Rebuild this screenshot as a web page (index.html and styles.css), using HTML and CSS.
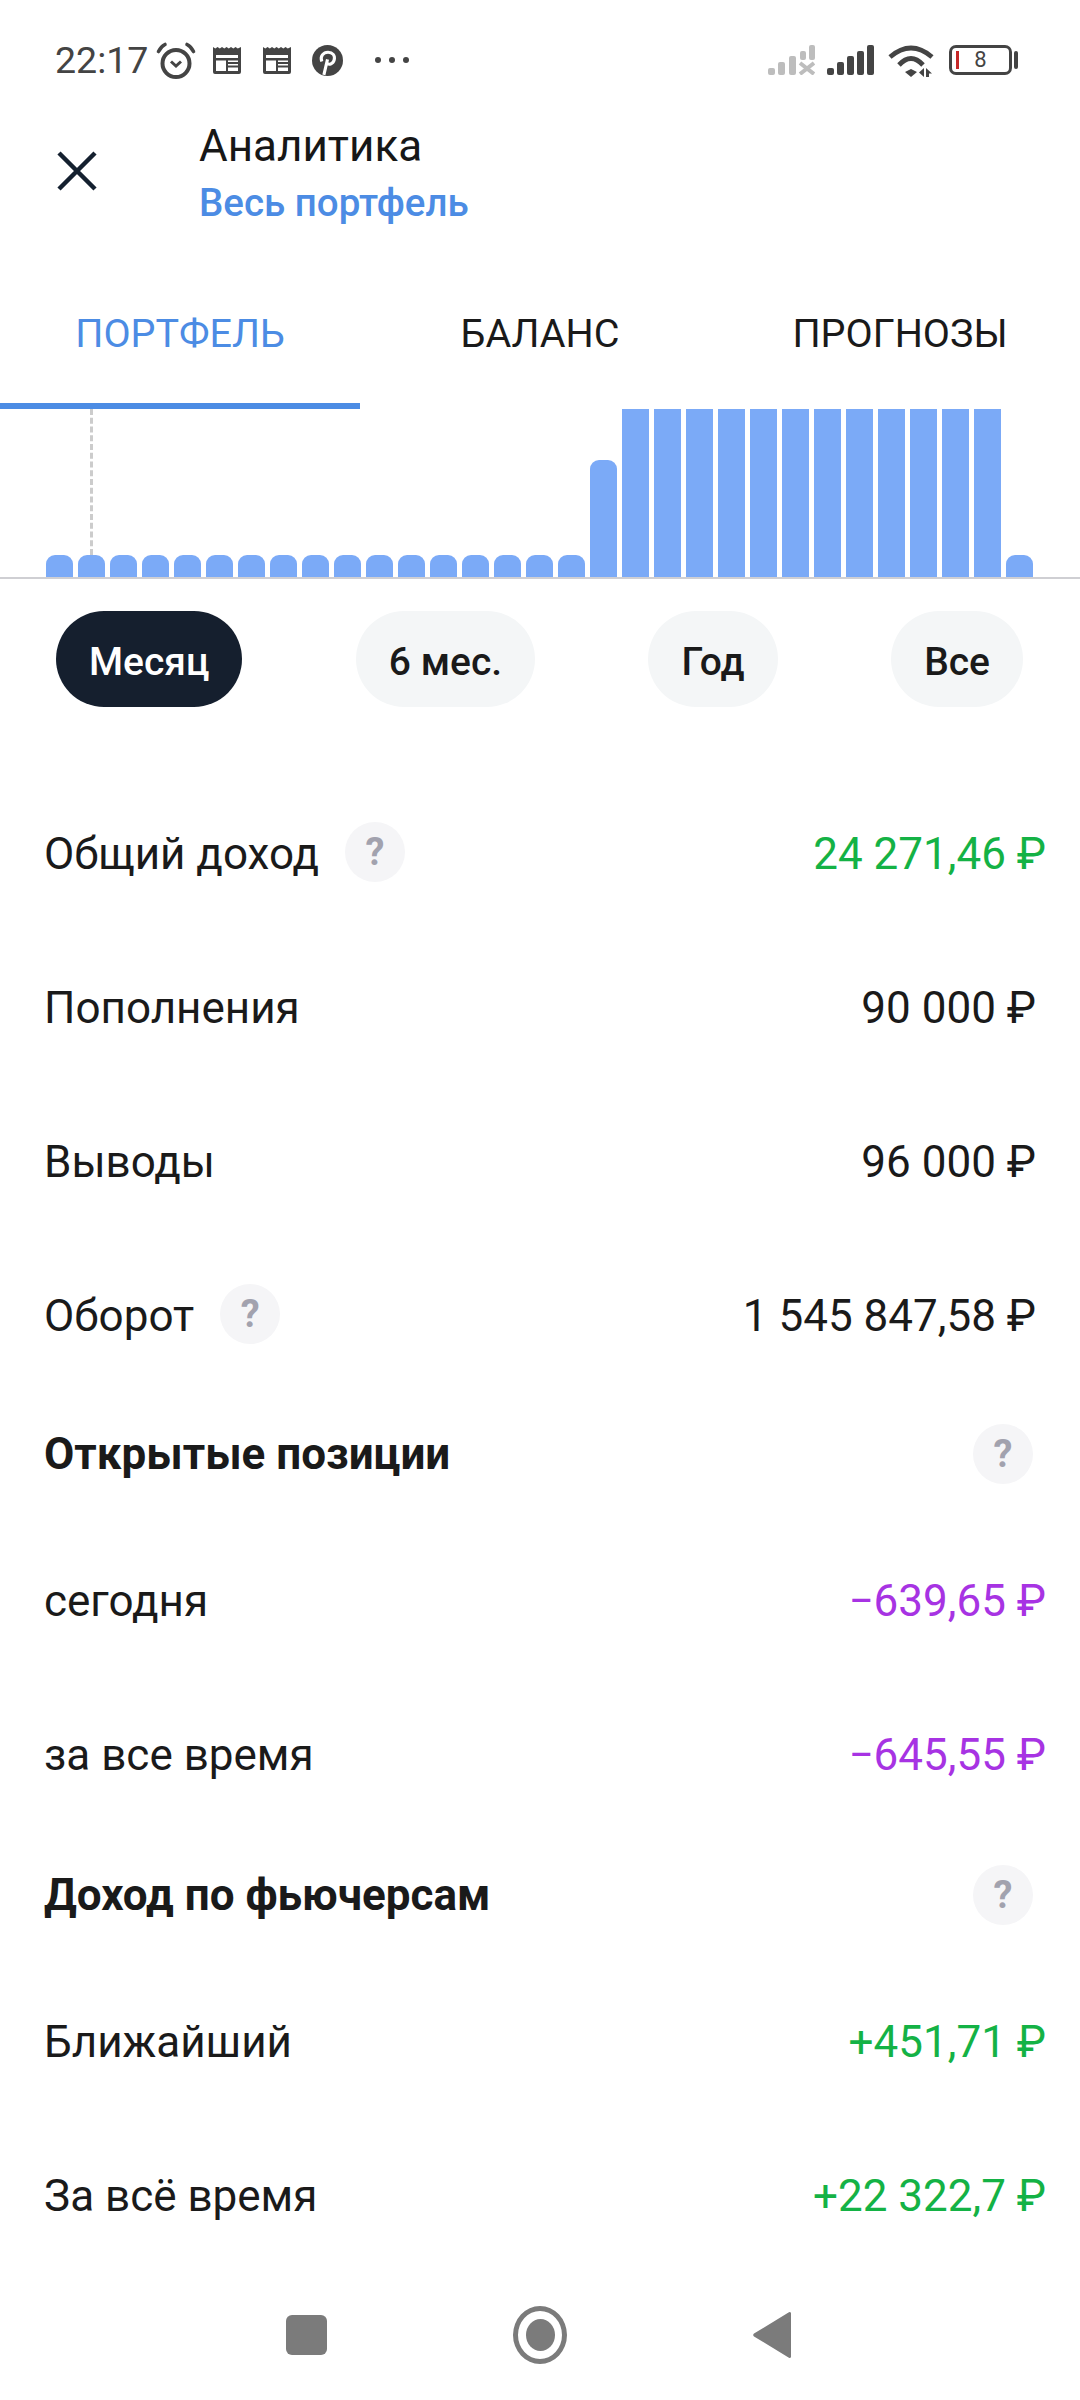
FILE: index.html
```html
<!DOCTYPE html>
<html lang="ru">
<head>
<meta charset="utf-8">
<title>Аналитика</title>
<link rel="stylesheet" href="styles.css">
</head>
<body>
<div class="screen">
  <header class="status">
    <div class="status-left">
      <span class="time">22:17</span>
      <svg class="ic-alarm" viewBox="0 0 40 37"><circle cx="20" cy="21.500" r="13.500" fill="none" stroke="#444" stroke-width="4"/><path d="M15 19.500l5 4.500 5-4.500" fill="none" stroke="#444" stroke-width="3"/><path d="M2.500 9.500C4 6.500 6 4 9 2.500M37.500 9.500C36 6.500 34 4 31 2.500" fill="none" stroke="#444" stroke-width="3.600" stroke-linecap="round"/></svg>
      <svg class="ic-news" viewBox="0 0 30 28"><path d="M1 1l2.300 1.500L5.500 1l2.300 1.500L10 1l2.300 1.500L14.500 1l2.300 1.500L19 1l2.300 1.500L23.500 1l2.300 1.500L29 1v25a2 2 0 0 1-2 2H3a2 2 0 0 1-2-2z" fill="#444"/><path d="M4 9h22v3H4zM4 14.500h10V25H4zM16 14.500h10V16H16zM16 18h10v1.500H16zM16 21.500h10V25H16z" fill="#fff"/></svg>
      <svg class="ic-news ic-news--next" viewBox="0 0 30 28"><path d="M1 1l2.300 1.500L5.500 1l2.300 1.500L10 1l2.300 1.500L14.500 1l2.300 1.500L19 1l2.300 1.500L23.500 1l2.300 1.500L29 1v25a2 2 0 0 1-2 2H3a2 2 0 0 1-2-2z" fill="#444"/><path d="M4 9h22v3H4zM4 14.500h10V25H4zM16 14.500h10V16H16zM16 18h10v1.500H16zM16 21.500h10V25H16z" fill="#fff"/></svg>
      <svg class="ic-pin" viewBox="0 0 30 30"><circle cx="15" cy="15" r="15" fill="#444"/><path d="M11.500 29l3.500-15M9.500 16c-2-5 1.500-9 6-9 4.500 0 7 3 6 7.500-1 4-5.500 5.500-7.500 2.500" fill="none" stroke="#fff" stroke-width="3"/></svg>
      <span class="dots"><i></i><i></i><i></i></span>
    </div>
    <div class="status-right">
      <svg class="ic-sig" viewBox="0 0 47 30"><g fill="#bdbdbd"><rect x="0" y="23" width="7" height="7" rx="2"/><rect x="10" y="17" width="7" height="13" rx="2"/><rect x="21" y="11" width="7" height="19" rx="2"/><rect x="32" y="6" width="6" height="9" rx="2"/><rect x="41" y="0" width="6" height="15" rx="2"/></g><path d="M32 18l14 11M46 18L32 29" stroke="#bdbdbd" stroke-width="4"/></svg>
      <svg class="ic-sig ic-sig--on" viewBox="0 0 47 30"><g fill="#444"><rect x="0" y="23" width="7" height="7" rx="2"/><rect x="10" y="17" width="7" height="13" rx="2"/><rect x="20" y="11" width="7" height="19" rx="2"/><rect x="30" y="6" width="7" height="24" rx="2"/><rect x="40" y="0" width="7" height="30" rx="2"/></g></svg>
      <svg class="ic-wifi" viewBox="0 0 46 33"><path d="M2 13Q23-5 44 13M11 21Q23 8 35 21" fill="none" stroke="#444" stroke-width="4.800"/><path d="M17 28l6-3 6 3-6 5z" fill="#444"/><path d="M36 24v9l-5-4.500zM38 24l6 5.500h-3V33h-3z" fill="#444"/></svg>
      <div class="battery"><span class="battery-level"></span><span class="battery-num">8</span><span class="battery-cap"></span></div>
    </div>
  </header>

  <div class="titlebar">
    <svg class="ic-close" viewBox="0 0 40 40"><path d="M2 2l36 36M38 2L2 38" stroke="#14202f" stroke-width="4.500" fill="none"/></svg>
    <div class="titles">
      <div class="title">Аналитика</div>
      <div class="subtitle">Весь портфель</div>
    </div>
  </div>

  <nav class="tabs">
    <div class="tab tab--active">ПОРТФЕЛЬ</div>
    <div class="tab">БАЛАНС</div>
    <div class="tab">ПРОГНОЗЫ</div>
  </nav>

  <div class="chart">
    <span class="cursor"></span>
    <span class="bar"></span><span class="bar"></span><span class="bar"></span><span class="bar"></span><span class="bar"></span><span class="bar"></span><span class="bar"></span><span class="bar"></span><span class="bar"></span><span class="bar"></span><span class="bar"></span><span class="bar"></span><span class="bar"></span><span class="bar"></span><span class="bar"></span><span class="bar"></span><span class="bar"></span>
    <span class="bar bar--mid"></span>
    <span class="bar bar--full"></span><span class="bar bar--full"></span><span class="bar bar--full"></span><span class="bar bar--full"></span><span class="bar bar--full"></span><span class="bar bar--full"></span><span class="bar bar--full"></span><span class="bar bar--full"></span><span class="bar bar--full"></span><span class="bar bar--full"></span><span class="bar bar--full"></span><span class="bar bar--full"></span>
    <span class="bar"></span>
  </div>

  <div class="pills">
    <div class="pill pill--active">Месяц</div>
    <div class="pill">6 мес.</div>
    <div class="pill">Год</div>
    <div class="pill">Все</div>
  </div>

  <main class="stats">
    <div class="row"><div class="label">Общий доход<span class="help">?</span></div><div class="val val--green">24 271,46 ₽</div></div>
    <div class="row"><div class="label">Пополнения</div><div class="val">90 000 ₽</div></div>
    <div class="row"><div class="label">Выводы</div><div class="val">96 000 ₽</div></div>
    <div class="row"><div class="label">Оборот<span class="help">?</span></div><div class="val">1 545 847,58 ₽</div></div>
    <div class="section"><div class="section-title">Открытые позиции</div><span class="help">?</span></div>
    <div class="row"><div class="label">сегодня</div><div class="val val--purple">−639,65 ₽</div></div>
    <div class="row"><div class="label">за все время</div><div class="val val--purple">−645,55 ₽</div></div>
    <div class="section section--late"><div class="section-title">Доход по фьючерсам</div><span class="help">?</span></div>
    <div class="row"><div class="label">Ближайший</div><div class="val val--green">+451,71 ₽</div></div>
    <div class="row"><div class="label">За всё время</div><div class="val val--green">+22 322,7 ₽</div></div>
  </main>

  <footer class="navbar">
    <span class="nav-square"></span>
    <span class="nav-home"><i></i></span>
    <svg class="nav-back" viewBox="0 0 38 46"><path d="M35.500 .500a1.500 1.500 0 0 1 2.500 1.500v42a1.500 1.500 0 0 1-2.500 1.500L1 24.500a1.800 1.800 0 0 1 0-3z" fill="#7b7b7b"/></svg>
  </footer>
</div>
</body>
</html>
```

FILE: styles.css
```css
* { box-sizing: border-box; }
html, body { margin: 0; padding: 0; background: #fff; }
body { font-family: Roboto, "Liberation Sans", sans-serif; color: #1a1a1a; }
.screen { width: 1080px; height: 2400px; overflow: hidden; position: relative; display: flex; flex-direction: column; }

.status { height: 120px; padding: 40px 62px 0 55px; display: flex; justify-content: space-between; align-items: flex-start; }
.status-left { display: flex; align-items: center; height: 40px; color: #444; }
.time { font-size: 37.500px; width: 101px; }
.ic-alarm { width: 40px; height: 37px; }
.ic-news { width: 30px; height: 28px; margin-left: 16px; }
.ic-news--next { margin-left: 20px; }
.ic-pin { width: 31px; height: 31px; margin-left: 20px; }
.dots { display: flex; gap: 8px; margin-left: 32px; }
.dots i { width: 6px; height: 6px; border-radius: 50%; background: #444; }
.status-right { display: flex; align-items: center; height: 40px; }
.ic-sig { width: 47px; height: 30px; }
.ic-sig--on { margin-left: 12px; }
.ic-wifi { width: 46px; height: 33px; margin-left: 14px; }
.battery { position: relative; width: 63px; height: 30px; margin: 0 6px 0 15px; border: 3px solid #444; border-radius: 7px; display: flex; align-items: center; justify-content: center; font-size: 22px; color: #444; }
.battery-level { position: absolute; left: 4px; top: 3px; width: 3px; height: 18px; background: #c62828; }
.battery-cap { position: absolute; right: -9px; top: 3px; width: 4px; height: 18px; background: #444; border-radius: 2px; }
.battery-num { line-height: 1; }

.titlebar { display: flex; height: 110px; padding-left: 57px; }
.ic-close { width: 40px; height: 40px; margin-top: 31px; }
.titles { margin-left: 102px; }
.title { font-size: 44px; line-height: 52px; color: #171717; }
.subtitle { font-size: 38.500px; line-height: 48px; font-weight: 500; color: #4c8ce4; margin-top: 7px; }

.tabs { display: grid; grid-template-columns: repeat(3, 360px); height: 179px; padding-top: 74px; }
.tab { font-size: 39.500px; text-align: center; line-height: 60px; color: #1a1a1a; height: 105px; }
.tab--active { color: #4c8ce4; border-bottom: 6px solid #4c8ce4; }

.chart { height: 170px; display: flex; gap: 5px; align-items: flex-end; padding-left: 46px; border-bottom: 2px solid #cfcfd3; position: relative; }
.bar { flex: 0 0 27px; height: 22px; background: #7baaf7; border-radius: 9px 9px 0 0; }
.bar--mid { height: 117px; }
.bar--full { height: 168px; border-radius: 0; }
.cursor { position: absolute; left: 90px; top: 0; bottom: 22px; width: 0; border-left: 3px dashed #cccccc; }

.pills { display: flex; justify-content: space-between; padding: 0 57px 0 56px; margin-top: 32px; }
.pill { height: 96px; padding: 3px 33px 0; border-radius: 48px; background: #f4f6f7; font-size: 39px; font-weight: 500; line-height: 96px; color: #1a1a1a; }
.pill--active { background: #151f2e; color: #fff; padding: 3px 33px 0; }

.stats { padding: 0 44px; margin-top: 70px; display: flex; flex-direction: column; }
.row { height: 154px; flex: none; display: flex; justify-content: space-between; align-items: center; font-size: 44px; }
.label { display: flex; align-items: center; }
.val { white-space: pre; }
.val--green { color: #14b245; margin-right: -10px; }
.val--purple { color: #a733e3; margin-right: -10px; }
.help { width: 60px; height: 60px; flex: none; border-radius: 50%; background: #f5f5f7; color: #a2a2ae; font-size: 38px; font-weight: 700; display: inline-flex; align-items: center; justify-content: center; margin: 0 0 5px 26px; }
.section { height: 131px; flex: none; padding: 0 3px 9px 0; display: flex; justify-content: space-between; align-items: center; }
.section--late { height: 133px; padding-bottom: 7px; }
.section .help { margin-bottom: 0; }
.section-title { font-size: 44px; font-weight: 700; color: #1a1a1a; }

.navbar { position: absolute; left: 0; right: 0; bottom: 0; height: 130px; background: #fff; display: flex; align-items: center; }
.nav-square { width: 41px; height: 40px; background: #7b7b7b; border-radius: 6px; margin-left: 286px; }
.nav-home { width: 54px; height: 58px; margin-left: 186px; border: 5px solid #7b7b7b; border-radius: 50%; display: flex; align-items: center; justify-content: center; }
.nav-home i { width: 29px; height: 32px; background: #7b7b7b; border-radius: 50%; }
.nav-back { width: 38px; height: 46px; margin-left: 186px; }
```
